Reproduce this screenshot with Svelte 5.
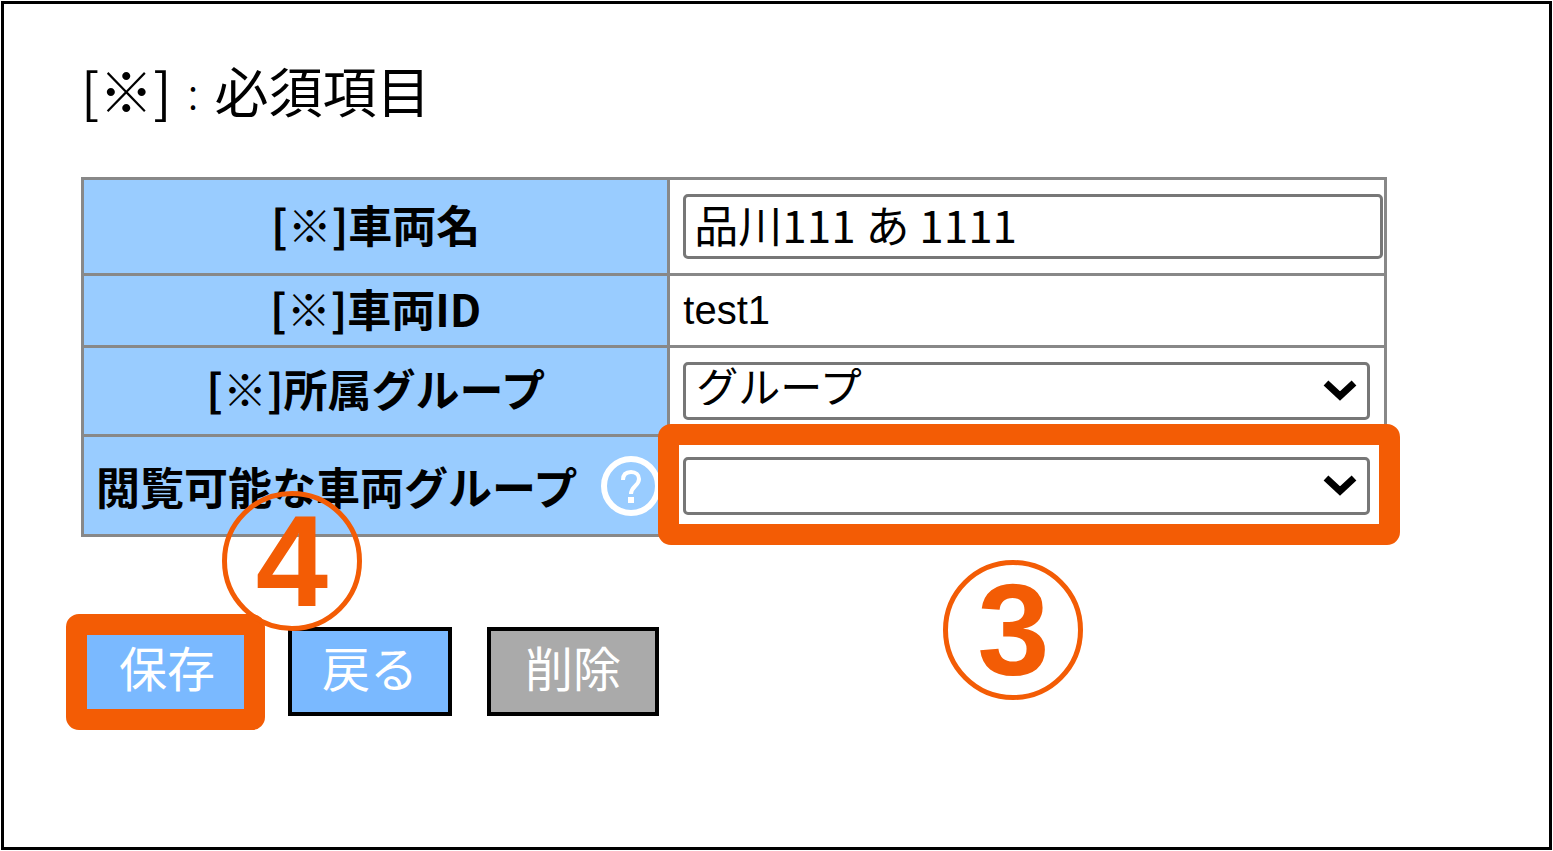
<script lang="ts">
  let name = $state('品川111 あ 1111');
  let group = $state('グループ');
  let viewGroup = $state('');
</script>

{#snippet chevron()}
  <svg class="chevron" viewBox="0 0 34 22" aria-hidden="true">
    <path d="M3 4 L17 17 L31 4" fill="none" stroke="#000" stroke-width="7" />
  </svg>
{/snippet}

<main class="frame">
  <p class="note"><span>[※]</span><span class="colon">:</span><span>必須項目</span></p>

  <form onsubmit={(e) => e.preventDefault()}>
    <table>
      <tbody>
        <tr class="r-name">
          <th scope="row"><label for="name">[※]車両名</label></th>
          <td class="wide"><input id="name" type="text" bind:value={name} /></td>
        </tr>
        <tr class="r-id">
          <th scope="row">[※]車両ID</th>
          <td class="plain">test1</td>
        </tr>
        <tr class="r-group">
          <th scope="row"><label for="group">[※]所属グループ</label></th>
          <td>
            <div class="select">
              <select id="group" bind:value={group}>
                <option value="グループ">グループ</option>
              </select>
              {@render chevron()}
            </div>
          </td>
        </tr>
        <tr class="r-view">
          <th scope="row">
            <div class="with-help">
              <label for="view-group">閲覧可能な車両グループ</label>
              <button type="button" class="help" aria-label="ヘルプ">
                <svg viewBox="0 0 60 60" aria-hidden="true">
                  <circle cx="30" cy="30" r="27" fill="none" stroke="#fff" stroke-width="6" />
                  <path
                    d="M22 24 C22 18 25 16 30 16 C35 16 38 19 38 23 C38 30 30 30 30 38"
                    fill="none"
                    stroke="#fff"
                    stroke-width="4"
                  />
                  <rect x="27" y="41" width="6" height="6" fill="#fff" />
                </svg>
              </button>
            </div>
          </th>
          <td>
            <div class="select">
              <select id="view-group" bind:value={viewGroup}>
                <option value=""></option>
              </select>
              {@render chevron()}
              <div class="mark mark-view"><span class="badge">3</span></div>
            </div>
          </td>
        </tr>
      </tbody>
    </table>

    <div class="actions">
      <div class="save">
        <button type="submit" class="btn">保存</button>
        <div class="mark mark-save"><span class="badge">4</span></div>
      </div>
      <button type="button" class="btn back">戻る</button>
      <button type="button" class="btn delete">削除</button>
    </div>
  </form>
</main>

<style>
  :global(body) {
    background: #fff;
  }
  .frame {
    box-sizing: border-box;
    min-height: calc(100vh - 2px);
    margin: 1px;
    padding: 46px 162px 60px 77px;
    border: 3px solid #000;
    font-family: 'Noto Sans CJK JP', sans-serif;
    color: #000;
  }
  .note {
    display: flex;
    margin: 0 0 47px;
    font-size: 54px;
    line-height: 80px;
  }
  .note .colon {
    padding: 0 16px;
    font-size: 44px;
    font-weight: 300;
  }

  table {
    width: 100%;
    table-layout: fixed;
    border-collapse: collapse;
  }
  th,
  td {
    box-sizing: border-box;
    padding: 0 14px 0 13px;
    border: 3px solid #888;
  }
  th {
    width: 45%;
    padding: 0 0 6px;
    background: #9cf;
    font-size: 44px;
    line-height: 60px;
    font-weight: 700;
    white-space: nowrap;
  }
  td.wide {
    padding-right: 1px;
  }
  td.plain {
    font-family: 'Liberation Sans', sans-serif;
    font-size: 40px;
  }
  .r-name {
    height: 96px;
  }
  .r-id {
    height: 72px;
  }
  .r-group {
    height: 89px;
  }
  .r-view {
    height: 100px;
  }
  .r-view th {
    padding-bottom: 0;
  }
  .with-help {
    display: flex;
    align-items: center;
    justify-content: space-between;
    padding: 0 6px 0 12px;
  }
  .help {
    width: 60px;
    height: 60px;
    padding: 0;
    border: 0;
    background: transparent;
  }
  .help svg {
    display: block;
  }

  input,
  select {
    display: block;
    box-sizing: border-box;
    width: 100%;
    border: 3px solid #777;
    border-radius: 5px;
    background: #fff;
    color: #000;
    font-family: inherit;
  }
  input {
    height: 65px;
    padding: 0 8px 6px;
    font-size: 44px;
  }
  select {
    appearance: none;
    height: 58px;
    padding: 0 60px 12px 10px;
    font-size: 42px;
    line-height: 40px;
  }
  .select {
    position: relative;
  }
  .chevron {
    position: absolute;
    top: 17px;
    right: 13px;
    width: 34px;
    height: 22px;
    pointer-events: none;
  }

  .actions {
    display: flex;
    gap: 35px;
    margin-top: 90px;
  }
  .btn {
    box-sizing: border-box;
    height: 89px;
    padding: 0 34px 12px;
    border: 4px solid #000;
    background: #7ab9ff;
    color: #fff;
    font-family: inherit;
    font-size: 48px;
    line-height: 68px;
  }
  .btn.back {
    padding: 0 30px 12px;
  }
  .btn.delete {
    background: #aaa;
  }
  .save {
    position: relative;
  }

  /* callouts drawn over the form */
  .mark {
    position: absolute;
    z-index: 1;
    border: 21px solid #f35c05;
    border-radius: 13px;
    pointer-events: none;
  }
  .mark-view {
    inset: -33px -30px -30px -25px;
  }
  .mark-save {
    inset: -13px -12px -14px -15px;
  }
  .badge {
    position: absolute;
    box-sizing: border-box;
    width: 140px;
    height: 140px;
    border: 5px solid #f35c05;
    border-radius: 50%;
    color: #f35c05;
    font-family: 'Liberation Sans', sans-serif;
    font-size: 130px;
    line-height: 130px;
    font-weight: 700;
    text-align: center;
  }
  .mark-view .badge {
    top: 115px;
    left: 264px;
  }
  .mark-save .badge {
    top: -144px;
    left: 135px;
  }
</style>
